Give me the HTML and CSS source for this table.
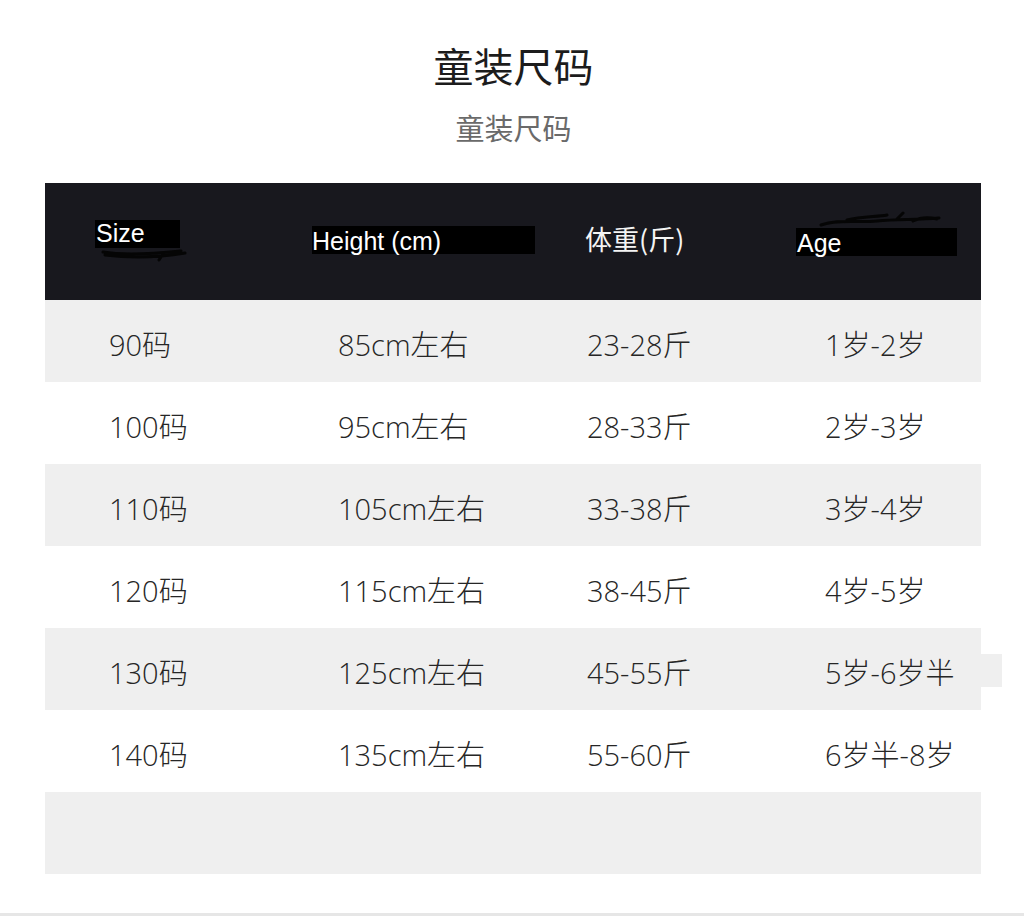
FILE: index.html
```html
<!DOCTYPE html>
<html lang="zh-CN">
<head>
<meta charset="utf-8">
<title>童装尺码</title>
<link rel="stylesheet" href="styles.css">
</head>
<body>
<div class="page">
  <h1 class="title">童装尺码</h1>
  <p class="subtitle">童装尺码</p>
  <div class="table">
    <div class="head">
      <span class="hbox h-size">Size</span>
      <span class="hbox h-height">Height (cm)</span>
      <span class="htext h-weight">体重(斤)</span>
      <span class="hbox h-age">Age</span>
      <svg class="smudge smudge-size" width="90" height="16" viewBox="0 0 90 16"><path d="M2 6 C20 9 50 8 80 5 M4 9 C30 12 60 11 84 7 M62 8 L58 14" stroke="#050505" stroke-width="3" fill="none" stroke-linecap="round"/></svg>
      <svg class="smudge smudge-age" width="130" height="20" viewBox="0 0 130 20"><path d="M4 14 C20 8 40 12 60 10 C80 8 100 9 122 7 M30 9 C45 5 60 6 70 4 M80 8 L86 2 M96 10 C104 6 112 6 120 8" stroke="#050505" stroke-width="3" fill="none" stroke-linecap="round"/></svg>
    </div>
    <div class="row gray"><span>90码</span><span>85cm左右</span><span>23-28斤</span><span>1岁-2岁</span></div>
    <div class="row"><span>100码</span><span>95cm左右</span><span>28-33斤</span><span>2岁-3岁</span></div>
    <div class="row gray"><span>110码</span><span>105cm左右</span><span>33-38斤</span><span>3岁-4岁</span></div>
    <div class="row"><span>120码</span><span>115cm左右</span><span>38-45斤</span><span>4岁-5岁</span></div>
    <div class="row gray patch"><span>130码</span><span>125cm左右</span><span>45-55斤</span><span>5岁-6岁半</span></div>
    <div class="row"><span>140码</span><span>135cm左右</span><span>55-60斤</span><span>6岁半-8岁</span></div>
    <div class="row gray"><span></span><span></span><span></span><span></span></div>
  </div>
  <div class="footline"></div>
</div>
</body>
</html>
```
FILE: styles.css
```css
* { box-sizing: border-box; }
html, body { margin: 0; padding: 0; background: #fff; }
body {
  width: 1024px;
  height: 916px;
  overflow: hidden;
  font-family: "Noto Sans CJK SC", "Noto Sans", sans-serif;
}
.page { position: relative; height: 916px; }
.title {
  margin: 0;
  padding-top: 42px;
  text-align: center;
  font-size: 40px;
  line-height: 46px;
  font-weight: 400;
  color: #1c1c1c;
  padding-left: 3px;
}
.subtitle {
  margin: 0;
  padding-top: 22px;
  text-align: center;
  font-size: 29px;
  line-height: 34px;
  font-weight: 400;
  color: #6a6a6a;
  padding-left: 3px;
}
.table {
  margin: 39px 0 0 45px;
  width: 936px;
}
.head {
  position: relative;
  height: 117px;
  background: #18181e;
  display: flex;
  align-items: flex-start;
  font-family: "Liberation Sans", Arial, sans-serif;
  color: #fff;
}
.hbox {
  background: #000;
  font-size: 25px;
  line-height: 28px;
  height: 28px;
  white-space: nowrap;
}
.h-size { margin: 37px 0 0 50px; width: 85px; padding-left: 1px; line-height: 26px; }
.h-height { margin: 43px 0 0 132px; width: 223px; padding-left: 0; line-height: 30px; }
.htext {
  font-family: "Noto Sans CJK SC", "Noto Sans", sans-serif;
  font-size: 27px;
  line-height: 30px;
}
.h-weight { margin: 41px 0 0 50px; width: 110px; color: #f4f4f4; }
.h-age { margin: 45px 0 0 101px; width: 161px; padding-left: 1px; line-height: 30px; }
.smudge { position: absolute; }
.smudge-size { left: 56px; top: 63px; }
.smudge-age { left: 772px; top: 28px; }
.row {
  position: relative;
  display: grid;
  grid-template-columns: 229px 249px 238px 1fr;
  padding-left: 64px;
  height: 82px;
  align-items: center;
  font-family: "Open Sans", "Noto Sans CJK SC", sans-serif;
  font-size: 29px;
  font-weight: 300;
  color: #262626;
  padding-top: 4px;
}
.row span { white-space: nowrap; }
.gray { background: #efefef; }
.patch::after {
  content: "";
  position: absolute;
  right: -21px;
  top: 26px;
  width: 21px;
  height: 33px;
  background: #efefef;
}
.footline {
  position: absolute;
  left: 0;
  right: 0;
  top: 913px;
  height: 3px;
  background: #e6e6e6;
}
```
